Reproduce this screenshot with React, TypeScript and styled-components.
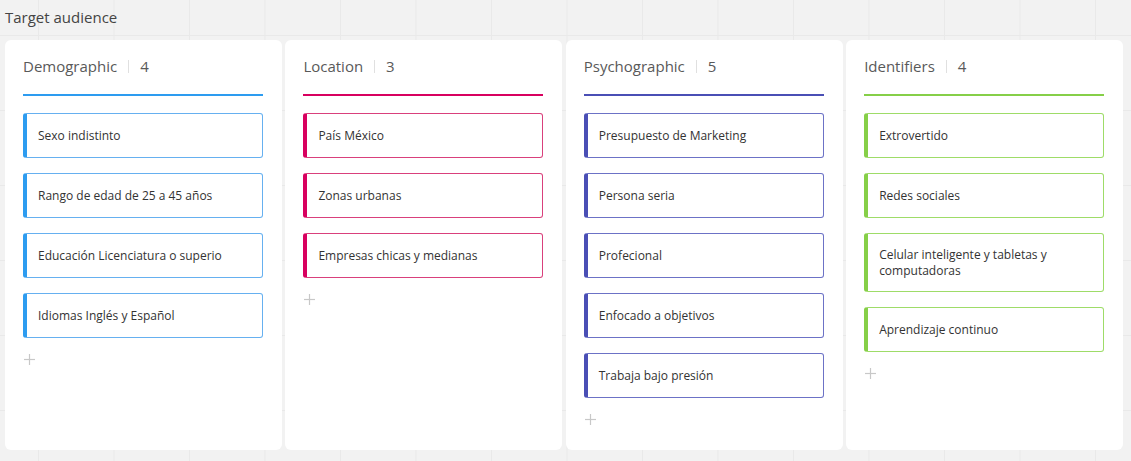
import React from 'react';
import styled, { createGlobalStyle } from 'styled-components';

const GlobalStyle = createGlobalStyle`
  html, body {
    margin: 0;
    padding: 0;
  }
  body {
    font-family: "Open Sans", "Noto Sans", sans-serif;
    background-color: #f2f2f2;
    background-image:
      linear-gradient(to right, #e9e9e9 1px, transparent 1px),
      linear-gradient(to bottom, #e9e9e9 1px, transparent 1px);
    background-size: 75.5px 75px;
    background-position: 38px 35px;
    width: 1131px;
    height: 461px;
    overflow: hidden;
  }
`;

const Page = styled.div`
  display: flex;
  flex-direction: column;
  padding: 0 8px 0 5px;
  height: 461px;
  box-sizing: border-box;
`;

const PageTitle = styled.div`
  font-size: 15px;
  line-height: 20px;
  color: #444;
  padding-top: 7px;
  height: 40px;
  box-sizing: border-box;
`;

const Board = styled.div`
  display: flex;
  gap: 3.5px;
`;

const Column = styled.section`
  flex: 1;
  height: 410px;
  background: #fff;
  border-radius: 6px;
  padding: 16px 19px 0 18px;
  box-sizing: border-box;
  display: flex;
  flex-direction: column;
`;

const Header = styled.div<{ $accent: string }>`
  display: flex;
  align-items: center;
  font-size: 15px;
  line-height: 20px;
  color: #595959;
  padding-bottom: 18px;
  border-bottom: 2px solid ${(p) => p.$accent};
  margin-bottom: 17px;
`;

const Divider = styled.span`
  width: 1px;
  height: 13px;
  background: #e0e0e0;
  margin: 0 11px;
`;

const Items = styled.div`
  display: flex;
  flex-direction: column;
  gap: 15px;
`;

const Item = styled.div<{ $accent: string; $border: string }>`
  border: 1px solid ${(p) => p.$border};
  border-left: 4px solid ${(p) => p.$accent};
  border-radius: 3px;
  min-height: 45px;
  box-sizing: border-box;
  padding: 13px 12px 12px 11px;
  font-size: 12px;
  line-height: 16px;
  color: #333;
  display: flex;
  align-items: center;
`;

const AddButton = styled.button`
  margin-top: 16px;
  width: 12px;
  height: 12px;
  padding: 0;
  border: none;
  background: none;
  color: #c8c8c8;
  display: flex;
  margin-left: 1px;
  cursor: pointer;
`;

interface Group {
  title: string;
  accent: string;
  border: string;
  items: string[];
}

const groups: Group[] = [
  {
    title: 'Demographic',
    accent: '#2d9cf0',
    border: '#66b0f0',
    items: [
      'Sexo indistinto',
      'Rango de edad de 25 a 45 años',
      'Educación Licenciatura o superio',
      'Idiomas Inglés y Español',
    ],
  },
  {
    title: 'Location',
    accent: '#d8005f',
    border: '#d9407c',
    items: ['País México', 'Zonas urbanas', 'Empresas chicas y medianas'],
  },
  {
    title: 'Psychographic',
    accent: '#4a4fb5',
    border: '#6c72c6',
    items: [
      'Presupuesto de Marketing',
      'Persona seria',
      'Profecional',
      'Enfocado a objetivos',
      'Trabaja bajo presión',
    ],
  },
  {
    title: 'Identifiers',
    accent: '#86cf48',
    border: '#9edc68',
    items: [
      'Extrovertido',
      'Redes sociales',
      'Celular inteligente y tabletas y computadoras',
      'Aprendizaje continuo',
    ],
  },
];

export default function App() {
  return (
    <>
      <GlobalStyle />
      <Page>
        <PageTitle>Target audience</PageTitle>
        <Board>
          {groups.map((g) => (
            <Column key={g.title}>
              <Header $accent={g.accent}>
                {g.title}
                <Divider />
                {g.items.length}
              </Header>
              <Items>
                {g.items.map((text) => (
                  <Item key={text} $accent={g.accent} $border={g.border}>
                    {text}
                  </Item>
                ))}
              </Items>
              <AddButton type="button" aria-label="Add">
                <svg width="11" height="11" viewBox="0 0 11 11" stroke="currentColor" strokeWidth="1.2">
                  <line x1="5.5" y1="0" x2="5.5" y2="11" />
                  <line x1="0" y1="5.5" x2="11" y2="5.5" />
                </svg>
              </AddButton>
            </Column>
          ))}
        </Board>
      </Page>
    </>
  );
}
